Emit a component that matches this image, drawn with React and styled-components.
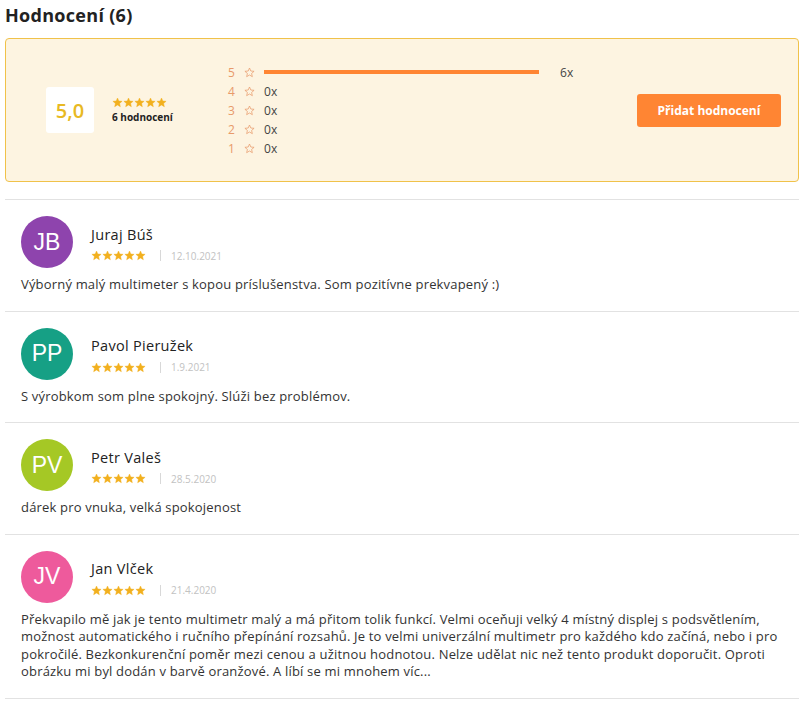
import styled, { createGlobalStyle } from "styled-components";

const GlobalStyle = createGlobalStyle`
  body {
    margin: 0;
    background: #ffffff;
    font-family: "Open Sans", "Liberation Sans", sans-serif;
    color: #333333;
  }
`;

const Page = styled.div`
  width: 808px;
  padding: 0 9px 0 5px;
  box-sizing: border-box;
`;

const Title = styled.h2`
  margin: 0;
  padding-top: 3px;
  height: 35px;
  font-size: 18px;
  font-weight: 700;
  letter-spacing: 0.3px;
  color: #222222;
`;

const Summary = styled.div`
  display: flex;
  align-items: center;
  height: 144px;
  box-sizing: border-box;
  padding: 0 17px 0 40px;
  background: #fdf4e1;
  border: 1px solid #f0c24a;
  border-radius: 4px;
`;

const ScoreGroup = styled.div`
  display: flex;
  align-items: center;
  width: 184px;
`;

const ScoreBox = styled.div`
  width: 48px;
  height: 46px;
  display: flex;
  align-items: center;
  justify-content: center;
  background: #ffffff;
  border-radius: 3px;
  font-size: 20px;
  font-weight: 600;
  color: #e8b923;
`;

const ScoreMeta = styled.div`
  display: flex;
  flex-direction: column;
  margin-left: 18px;
  gap: 2px;
`;

const Count = styled.span`
  font-size: 10px;
  font-weight: 700;
  color: #222222;
`;

const Distribution = styled.div`
  display: flex;
  flex-direction: column;
`;

const DistRow = styled.div`
  display: flex;
  align-items: center;
  height: 19px;
  font-size: 12px;
`;

const DistNum = styled.span`
  width: 16px;
  margin-left: -2px;
  color: #e89a6a;
`;

const DistStar = styled.span`
  width: 20px;
  display: flex;
  align-items: center;
`;

const Bar = styled.div`
  width: ${(p) => p.$w}px;
  height: 4px;
  background: #ff8533;
  margin-right: 21px;
`;

const DistCount = styled.span`
  color: #444444;
`;

const AddButton = styled.button`
  margin-left: auto;
  width: 144px;
  height: 33px;
  border: none;
  border-radius: 3px;
  background: #ff8533;
  color: #ffffff;
  font-family: inherit;
  font-size: 12px;
  font-weight: 700;
  cursor: pointer;
`;

const List = styled.div`
  margin-top: 17px;
  border-top: 1px solid #e2e2e2;
`;

const Review = styled.div`
  padding: 16px 0 17px 16px;
  border-bottom: 1px solid #e2e2e2;
`;

const Head = styled.div`
  display: flex;
  align-items: center;
`;

const Avatar = styled.div`
  width: 52px;
  height: 52px;
  border-radius: 50%;
  background: ${(p) => p.$color};
  color: #ffffff;
  display: flex;
  align-items: center;
  justify-content: center;
  font-family: "Liberation Sans", Arial, sans-serif;
  font-size: 23px;
  flex-shrink: 0;
`;

const Who = styled.div`
  margin-left: 18px;
  margin-top: 3px;
  display: flex;
  flex-direction: column;
  gap: 5px;
`;

const Name = styled.span`
  font-size: 14.5px;
  letter-spacing: 0.3px;
  color: #222222;
`;

const MetaLine = styled.div`
  display: flex;
  align-items: center;
`;

const Sep = styled.span`
  margin: 0 10px 0 14px;
  width: 1px;
  height: 11px;
  background: #d8d8d8;
`;

const Date = styled.span`
  font-size: 10px;
  color: #c2c2c2;
`;

const Text = styled.p`
  margin: 8px 0 0;
  padding-right: 10px;
  font-size: 13px;
  letter-spacing: 0.18px;
  line-height: 17.5px;
  color: #333333;
`;

const StarsWrap = styled.span`
  display: inline-flex;
`;

const StarIcon = ({ filled, size = 11 }) => (
  <svg width={size} height={size} viewBox="0 0 24 24">
    <path
      d="M12 2.2l2.9 6.6 7.1.6-5.4 4.7 1.6 7-6.2-3.7-6.2 3.7 1.6-7L2 9.4l7.1-.6z"
      fill={filled ? "#f2b01e" : "none"}
      stroke={filled ? "#f2b01e" : "#e89a6a"}
      strokeWidth={filled ? 1 : 1.6}
      strokeLinejoin="round"
    />
  </svg>
);

const Stars = () => (
  <StarsWrap>
    {[0, 1, 2, 3, 4].map((i) => (
      <StarIcon key={i} filled />
    ))}
  </StarsWrap>
);

const dist = [
  { n: 5, c: 6 },
  { n: 4, c: 0 },
  { n: 3, c: 0 },
  { n: 2, c: 0 },
  { n: 1, c: 0 },
];

const reviews = [
  {
    initials: "JB",
    color: "#8e44ad",
    name: "Juraj Búš",
    date: "12.10.2021",
    text: "Výborný malý multimeter s kopou príslušenstva. Som pozitívne prekvapený :)",
  },
  {
    initials: "PP",
    color: "#16a085",
    name: "Pavol Pieružek",
    date: "1.9.2021",
    text: "S výrobkom som plne spokojný. Slúži bez problémov.",
  },
  {
    initials: "PV",
    color: "#a5c825",
    name: "Petr Valeš",
    date: "28.5.2020",
    text: "dárek pro vnuka, velká spokojenost",
  },
  {
    initials: "JV",
    color: "#ee5a9c",
    name: "Jan Vlček",
    date: "21.4.2020",
    text: "Překvapilo mě jak je tento multimetr malý a má přitom tolik funkcí. Velmi oceňuji velký 4 místný displej s podsvětlením, možnost automatického i ručního přepínání rozsahů. Je to velmi univerzální multimetr pro každého kdo začíná, nebo i pro pokročilé. Bezkonkurenční poměr mezi cenou a užitnou hodnotou. Nelze udělat nic než tento produkt doporučit. Oproti obrázku mi byl dodán v barvě oranžové. A líbí se mi mnohem víc...",
  },
];

const App = () => {
  const max = 6;
  return (
    <Page>
      <GlobalStyle />
      <Title>Hodnocení (6)</Title>
      <Summary>
        <ScoreGroup>
          <ScoreBox>5,0</ScoreBox>
          <ScoreMeta>
            <Stars />
            <Count>6 hodnocení</Count>
          </ScoreMeta>
        </ScoreGroup>
        <Distribution>
          {dist.map((d) => (
            <DistRow key={d.n}>
              <DistNum>{d.n}</DistNum>
              <DistStar>
                <StarIcon size={11} />
              </DistStar>
              {d.c > 0 && <Bar $w={(d.c / max) * 275} />}
              <DistCount>{d.c}x</DistCount>
            </DistRow>
          ))}
        </Distribution>
        <AddButton>Přidat hodnocení</AddButton>
      </Summary>
      <List>
        {reviews.map((r) => (
          <Review key={r.name}>
            <Head>
              <Avatar $color={r.color}>{r.initials}</Avatar>
              <Who>
                <Name>{r.name}</Name>
                <MetaLine>
                  <Stars />
                  <Sep />
                  <Date>{r.date}</Date>
                </MetaLine>
              </Who>
            </Head>
            <Text>{r.text}</Text>
          </Review>
        ))}
      </List>
    </Page>
  );
};

export default App;
